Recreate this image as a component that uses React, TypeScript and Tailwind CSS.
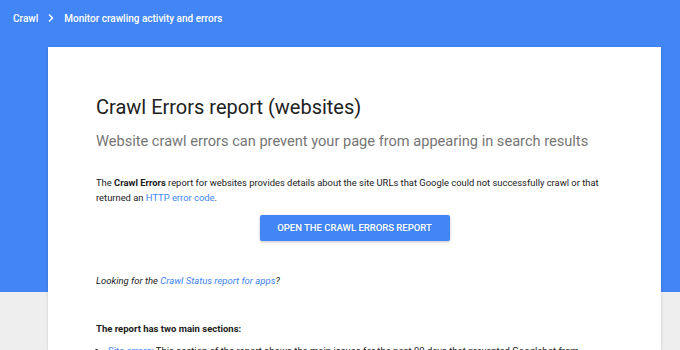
export default function App() {
  return (
    <div className="h-[350px] w-[680px] overflow-hidden bg-[linear-gradient(to_bottom,#4285f4_292px,#eeeeee_292px)] font-['Roboto',sans-serif]">
      {/* Breadcrumb */}
      <div className="flex h-[47px] items-start gap-[9px] px-[13px] pt-[11px] text-[10px] font-medium text-white">
        <span>Crawl</span>
        <svg width="8" height="10" viewBox="0 0 8 10" className="mt-[2px]">
          <path d="M2 1.5 L5.5 5 L2 8.5" fill="none" stroke="white" strokeWidth="1.4" />
        </svg>
        <span>Monitor crawling activity and errors</span>
      </div>

      {/* Card */}
      <div className="ml-[48px] h-[303px] w-[613px] bg-white px-[48px] pt-[46px] shadow-[0_1px_3px_rgba(0,0,0,0.15)]">
        <h1 className="text-[20px] leading-[28px] text-[#212121]">Crawl Errors report (websites)</h1>
        <p className="mt-[10px] text-[14.6px] leading-[20px] text-[#757575]">
          Website crawl errors can prevent your page from appearing in search results
        </p>

        <p className="mt-[24px] w-[515px] text-[9.4px] leading-[15px] text-[#212121]">
          The <b className="font-bold">Crawl Errors</b> report for websites provides details about the site URLs that
          Google could not successfully crawl or that returned an{" "}
          <span className="text-[#4285f4]">HTTP error code</span>.
        </p>

        <div className="mt-[10px] flex justify-center">
          <button className="h-[26px] w-[190px] rounded-[2px] bg-[#4285f4] text-[9.5px] font-medium text-white shadow-[0_1px_3px_rgba(0,0,0,0.25)]">
            OPEN THE CRAWL ERRORS REPORT
          </button>
        </div>

        <p className="mt-[32px] text-[9.5px] italic leading-[15px] text-[#212121]">
          Looking for the <span className="text-[#4285f4]">Crawl Status report for apps</span>?
        </p>

        <p className="mt-[33px] text-[9.5px] font-bold leading-[15px] text-[#212121]">
          The report has two main sections:
        </p>

        <ul className="mt-[7px] w-[492px] list-disc pl-[12px] text-[9.5px] leading-[15px] text-[#212121]">
          <li>
            <span className="text-[#4285f4]">Site errors:</span> This section of the report shows the main issues for
            the past 90 days that prevented Googlebot from accessing your entire site.
          </li>
        </ul>
      </div>
    </div>
  );
}
